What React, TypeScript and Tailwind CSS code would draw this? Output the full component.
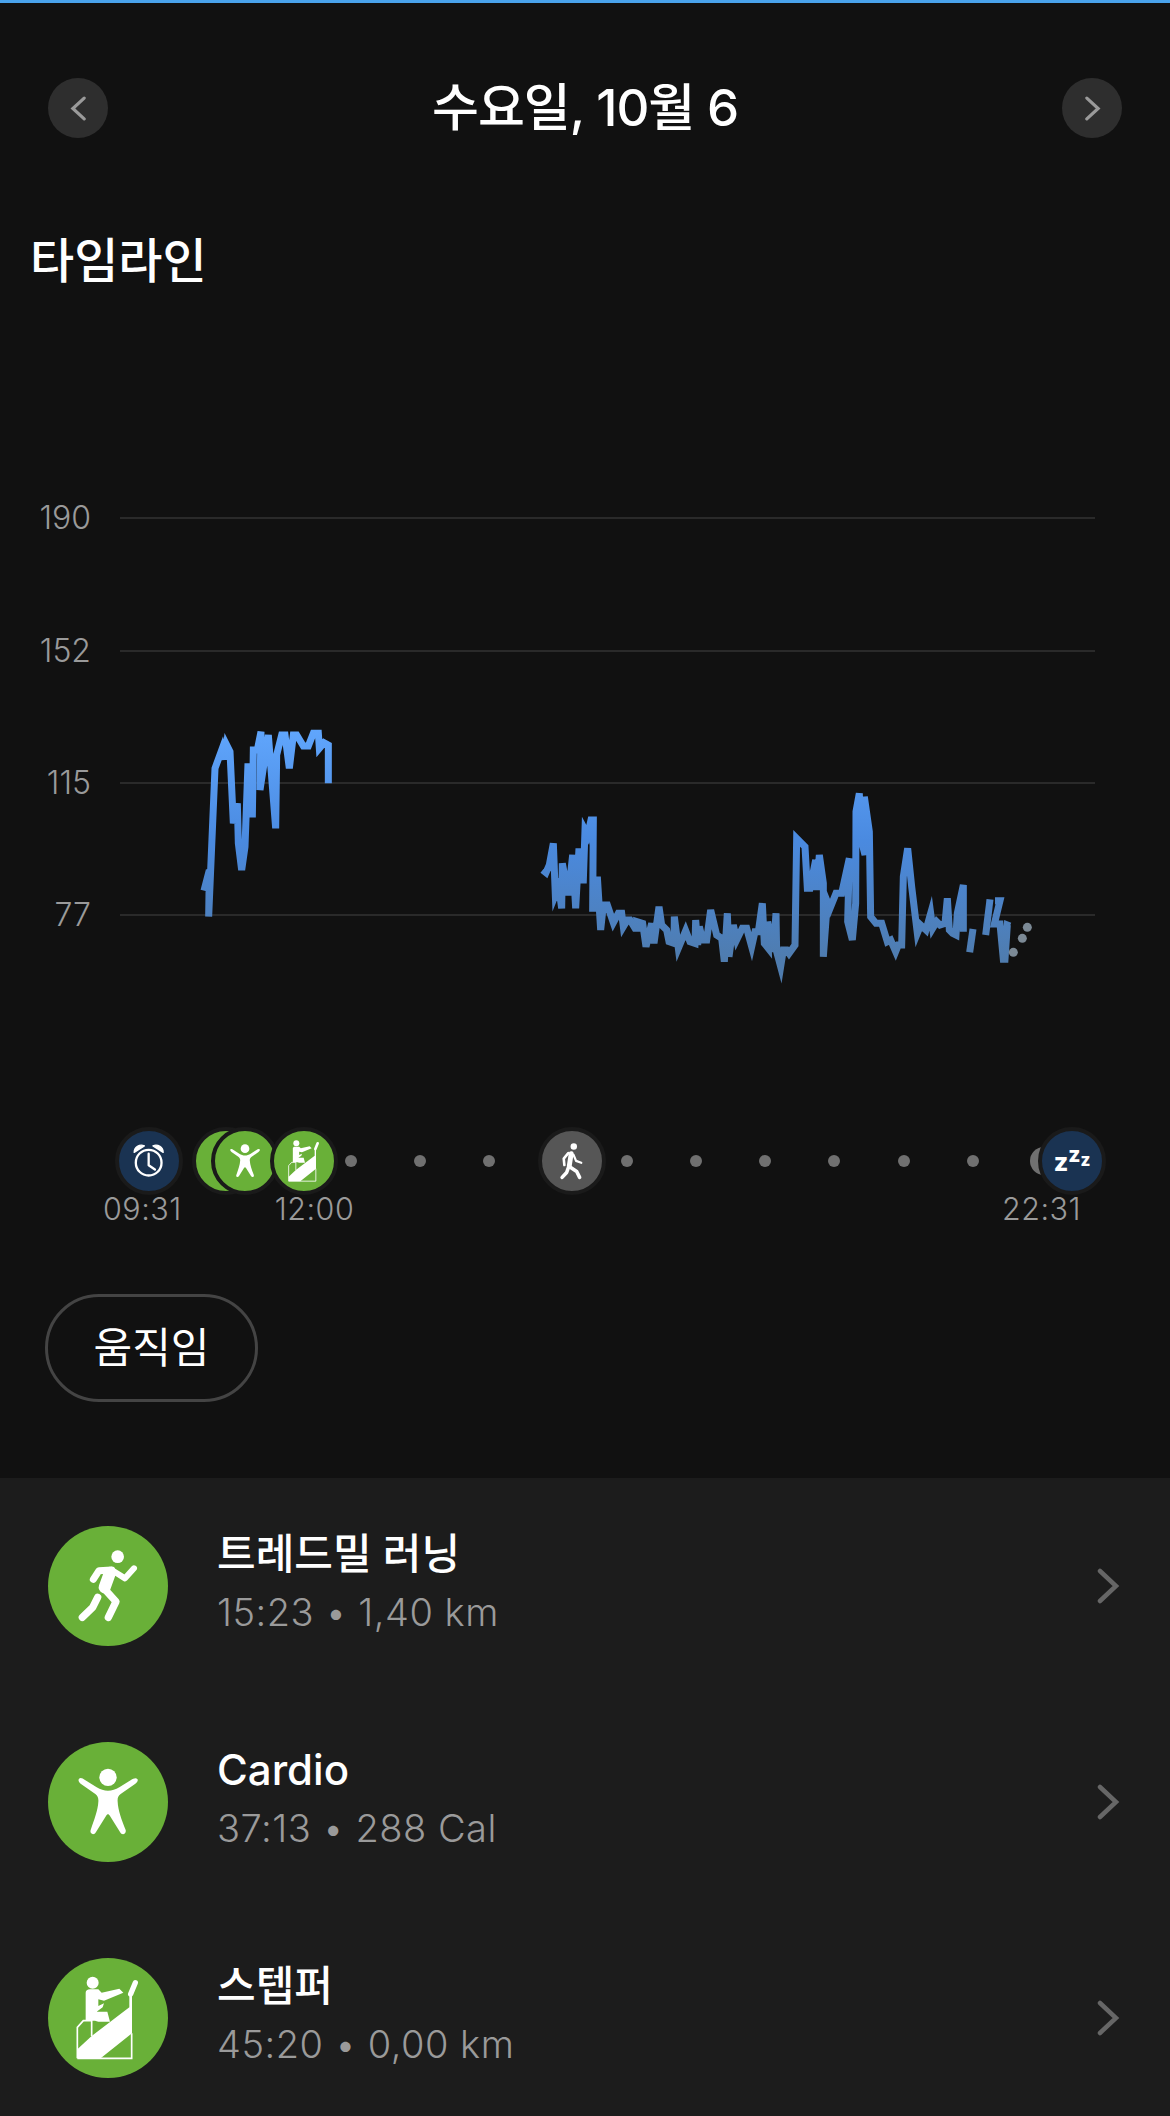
const KR = "font-['Inter','Noto_Sans_CJK_KR',sans-serif]";

type Pt = [number, number];

// chart points were read off crops of the picture, so each run has its own origin
const fromCrop = (ox: number, oy: number, pts: Pt[]): Pt[] =>
  pts.map(([x, y]) => [ox + x / 3, oy + y / 3]);

const morning = fromCrop(180, 700, [
  [72, 572], [88, 510], [86, 650], [105, 205], [127, 145], [135, 178], [140, 135], [150, 155],
  [160, 370], [172, 310], [175, 430], [185, 510], [195, 440], [204, 190], [217, 352], [220, 150],
  [232, 150], [243, 95], [240, 270], [265, 105], [287, 385], [290, 165], [305, 105], [315, 105],
  [328, 205], [340, 105], [350, 105], [370, 138], [385, 138], [400, 100], [415, 100], [418, 145],
  [432, 128], [445, 135], [445, 250],
]);

const afternoon = [
  ...fromCrop(520, 780, [
    [68, 270], [78, 278], [88, 255], [100, 190], [106, 345], [116, 320], [125, 385], [127, 250],
    [145, 345], [158, 225], [167, 385], [177, 205], [180, 300], [190, 300], [195, 150], [203, 165],
    [213, 120], [220, 120], [218, 385], [228, 385], [232, 290], [242, 450], [250, 375], [262, 375],
    [280, 428], [295, 400], [305, 400], [310, 440], [322, 420], [330, 420], [345, 445], [355, 445],
    [352, 425], [368, 430], [378, 500], [395, 430], [402, 490], [417, 380], [425, 435], [440, 450],
    [447, 485], [462, 490], [463, 410], [475, 505], [497, 452], [510, 485], [525, 490], [527, 420],
    [533, 495], [538, 440], [548, 480], [560, 480], [572, 390], [590, 465], [605, 475], [613, 545],
    [622, 400], [627, 530], [640, 435], [650, 480], [667, 445], [680, 445], [695, 500], [705, 455],
    [715, 455], [727, 370], [733, 490], [745, 505], [743, 425], [760, 515], [768, 400], [770, 515],
    [782, 560], [790, 510], [800, 510], [807, 520], [825, 495], [830, 175],
  ]),
  ...fromCrop(800, 780, [
    [15, 200], [22, 325], [30, 325], [47, 240], [50, 330], [58, 225], [70, 310], [70, 530], [82, 365],
    [90, 385], [108, 340], [125, 340], [148, 235], [143, 425], [157, 480], [167, 370], [168, 95],
    [178, 40], [180, 165], [195, 225], [193, 50], [208, 155], [212, 410], [228, 430], [245, 430],
    [262, 485], [272, 480], [287, 515], [295, 495], [305, 495], [310, 290], [323, 205], [335, 320],
    [352, 460], [362, 435], [378, 450], [392, 400], [398, 445], [410, 425], [420, 435], [435, 430],
    [442, 355], [448, 450], [458, 460], [468, 465], [472, 400], [490, 315], [490, 455],
  ]),
];

const pieces: Pt[][] = [
  morning,
  afternoon,
  fromCrop(800, 780, [[519, 447], [509, 517]]),
  fromCrop(800, 780, [[570, 358], [557, 465]]),
  fromCrop(800, 780, [[585, 362], [600, 362], [583, 432], [600, 432], [610, 538], [615, 538], [622, 435], [630, 438]]),
];

const strays: Pt[] = fromCrop(800, 780, [[640, 517], [667, 475], [682, 442]]);

const grid = [
  { y: 518, label: "190" },
  { y: 651, label: "152" },
  { y: 783, label: "115" },
  { y: 915, label: "77" },
];

// the svg sits 320px down the page
const CHART_TOP = 320;
const toPoints = (pts: Pt[]) => pts.map(([x, y]) => `${x},${y - CHART_TOP}`).join(" ");

function HeartChart() {
  return (
    <svg width="1170" height="807" className="block">
      <defs>
        <linearGradient id="hr" gradientUnits="userSpaceOnUse" x1="0" y1="400" x2="0" y2="640">
          <stop offset="0" stopColor="#62a8ff" />
          <stop offset="0.5" stopColor="#4a8ae0" />
          <stop offset="1" stopColor="#4f7cae" />
        </linearGradient>
      </defs>
      {grid.map((g) => (
        <g key={g.label}>
          <line x1="120" x2="1095" y1={g.y - CHART_TOP} y2={g.y - CHART_TOP} stroke="#333333" strokeWidth="1.5" />
          <text
            x="91"
            y={g.y - CHART_TOP + 11}
            textAnchor="end"
            fill="#9a9a9a"
            fontSize="32"
            fontWeight="300"
            fontFamily="Inter, sans-serif"
          >
            {g.label}
          </text>
        </g>
      ))}
      {pieces.map((p, i) => (
        <polyline
          key={i}
          points={toPoints(p)}
          fill="none"
          stroke="url(#hr)"
          strokeWidth="7"
          strokeLinejoin="miter"
          strokeMiterlimit="5"
        />
      ))}
      {strays.map(([x, y]) => (
        <circle key={x} cx={x} cy={y - CHART_TOP} r="4.5" fill="#7c8a96" />
      ))}
    </svg>
  );
}

function Chevron({ dir, className }: { dir: "left" | "right"; className: string }) {
  return (
    <svg viewBox="0 0 24 36" preserveAspectRatio="none" className={className} fill="none" stroke="currentColor" strokeWidth="4.5" strokeLinecap="round">
      <path d={dir === "left" ? "M20 3 L4 18 L20 33" : "M4 3 L20 18 L4 33"} />
    </svg>
  );
}

function AlarmGlyph() {
  return (
    <svg viewBox="88 61 182 182" className="w-full h-full" fill="none" stroke="white" strokeWidth="7" strokeLinecap="round" strokeLinejoin="round">
      <circle cx="178" cy="157" r="39" />
      <path d="M178 130 V165 L197 178" />
      <path d="M134 126 C134 110 150 100 165 106 Z" fill="white" strokeWidth="4" />
      <path d="M222 126 C222 110 206 100 191 106 Z" fill="white" strokeWidth="4" />
    </svg>
  );
}

function RunGlyph() {
  return (
    <svg viewBox="54 48 360 360" className="w-full h-full" fill="none" stroke="white" strokeLinecap="round" strokeLinejoin="round">
      <circle cx="263" cy="140" r="19" fill="white" stroke="none" />
      <path d="M190 208 L207 182 L245 180" strokeWidth="21" />
      <path d="M245 180 L285 205 L312 175" strokeWidth="18" />
      <path d="M240 188 L224 232" strokeWidth="36" />
      <path d="M222 235 L258 275 L235 322" strokeWidth="22" />
      <path d="M203 262 L188 292 L157 322" strokeWidth="22" />
    </svg>
  );
}

function CardioGlyph() {
  return (
    <svg viewBox="54 36 360 360" className="w-full h-full" fill="white">
      <circle cx="234" cy="142" r="26" />
      <path d="M147 146 C152 142 158 145 165 150 L200 172 C222 186 246 186 268 172 L303 150 C310 145 318 142 322 147 C326 152 320 158 315 162 L272 192 C264 198 262 205 263 215 C264 240 275 270 287 300 C290 312 276 318 270 306 L240 258 C236 251 232 251 228 258 L198 306 C192 318 178 312 182 300 C192 270 204 240 205 215 C206 205 203 198 196 192 L153 162 C148 158 143 152 147 146 Z" />
    </svg>
  );
}

function StepperGlyph() {
  return (
    <svg viewBox="54 24 360 360" className="w-full h-full" fill="white">
      <circle cx="188" cy="98" r="18" />
      <path d="M167 128 C167 122 172 118 180 118 H205 L215 128 L268 116 L280 128 L222 152 L205 148 V168 L222 160 L218 172 L200 185 L232 185 L240 215 L205 215 L195 212 H167 Z" />
      <path d="M142 298 L185 258 L298 172 V130 H306 V250 L212 325 H142 Z" />
      <path d="M302 132 L316 98" stroke="white" strokeWidth="16" strokeLinecap="round" />
      <path d="M142 325 V232 L160 212 H185 V258 M305 250 V325 H142" fill="none" stroke="white" strokeWidth="5" />
    </svg>
  );
}

function WalkGlyph() {
  return (
    <svg viewBox="65 62 185 185" className="w-full h-full" fill="none" stroke="white" strokeLinecap="round" strokeLinejoin="round">
      <circle cx="163" cy="110" r="10" fill="white" stroke="none" />
      <path d="M155 132 L149 170" strokeWidth="15" />
      <path d="M150 172 L172 187 L181 205" strokeWidth="11" />
      <path d="M146 176 L141 190 L127 205" strokeWidth="11" />
      <path d="M146 130 L132 147 L134 167" strokeWidth="8" />
      <path d="M162 135 L170 154 L186 160" strokeWidth="7" />
    </svg>
  );
}

function Marker({ left, color, children }: { left: number; color: string; children?: React.ReactNode }) {
  return (
    <div
      className={`absolute top-0 w-[68px] h-[68px] rounded-full border-[4px] border-[#1a1a1a] flex items-center justify-center ${color}`}
      style={{ left: left - 34 }}
    >
      {children}
    </div>
  );
}

function Timeline() {
  const dots = [351, 420, 489, 627, 696, 765, 834, 904, 973];
  return (
    <div className="relative h-[68px] w-full">
      {dots.map((x) => (
        <div key={x} className="absolute top-[28px] w-3 h-3 rounded-full bg-[#707070]" style={{ left: x - 6 }} />
      ))}
      <div className="absolute top-[20px] left-[1030px] w-[28px] h-[28px] rounded-full bg-[#707070]" />
      <Marker left={149} color="bg-[#1a3352]">
        <AlarmGlyph />
      </Marker>
      <Marker left={226} color="bg-[#69b038]" />
      <Marker left={245} color="bg-[#69b038]">
        <CardioGlyph />
      </Marker>
      <Marker left={304} color="bg-[#69b038]">
        <StepperGlyph />
      </Marker>
      <Marker left={572} color="bg-[#565656]">
        <WalkGlyph />
      </Marker>
      <Marker left={1072} color="bg-[#1a3352]">
        <span className="flex items-baseline font-['Inter',sans-serif] font-extrabold text-white leading-none mt-[2px]">
          <span className="text-[25px]">z</span>
          <span className="text-[21px] -translate-y-[9px]">z</span>
          <span className="text-[17px] -translate-y-[5px]">z</span>
        </span>
      </Marker>
    </div>
  );
}

const activities = [
  { name: "트레드밀 러닝", detail: "15:23 • 1,40 km", Icon: RunGlyph },
  { name: "Cardio", detail: "37:13 • 288 Cal", Icon: CardioGlyph },
  { name: "스텝퍼", detail: "45:20 • 0,00 km", Icon: StepperGlyph },
];

export default function App() {
  return (
    <div className={`w-[1170px] h-[2116px] overflow-hidden bg-[#111111] text-white ${KR}`}>
      <div className="h-[3px] bg-[#4aa3ec]" />

      <header className="flex items-center justify-between px-[48px] pt-[75px]">
        <button className="w-[60px] h-[60px] rounded-full bg-[#2e2e2e] flex items-center justify-center text-[#9a9a9a]">
          <Chevron dir="left" className="w-[17px] h-[25px]" />
        </button>
        <h1 className="text-[51px] font-medium leading-[60px] tracking-[-1px]">수요일, 10월 6</h1>
        <button className="w-[60px] h-[60px] rounded-full bg-[#2e2e2e] flex items-center justify-center text-[#9a9a9a]">
          <Chevron dir="right" className="w-[17px] h-[25px]" />
        </button>
      </header>

      <h2 className="pl-[30px] pt-[96px] text-[48px] font-medium leading-[54px]">타임라인</h2>

      <div className="mt-[32px]">
        <HeartChart />
      </div>

      <Timeline />
      <div className="flex justify-between -mt-[4px] pl-[103px] pr-[89px] text-[30.5px] font-light leading-[36px] text-[#9a9a9a] tracking-[0.5px]">
        <div className="flex gap-[93px]">
          <span>09:31</span>
          <span>12:00</span>
        </div>
        <span>22:31</span>
      </div>

      <div className="pl-[45px] pt-[67px]">
        <button className="w-[213px] h-[108px] rounded-full border-[3px] border-[#444444] text-[42px] leading-none">
          움직임
        </button>
      </div>

      <ul className="mt-[76px] bg-[#1c1c1c]">
        {activities.map(({ name, detail, Icon }) => (
          <li key={name} className="h-[216px] flex items-center px-[48px]">
            <div className="w-[120px] h-[120px] rounded-full bg-[#69b038] flex items-center justify-center shrink-0">
              <Icon />
            </div>
            <div className="ml-[49px] flex-1 pb-[6px]">
              <div className="text-[42px] font-medium leading-[50px]">{name}</div>
              <div className="mt-[8px] text-[38px] font-light leading-[50px] text-[#9a9a9a] tracking-[0.5px]">{detail}</div>
            </div>
            <Chevron dir="right" className="w-[24px] h-[36px] text-[#666666] mr-[2px]" />
          </li>
        ))}
      </ul>
    </div>
  );
}
